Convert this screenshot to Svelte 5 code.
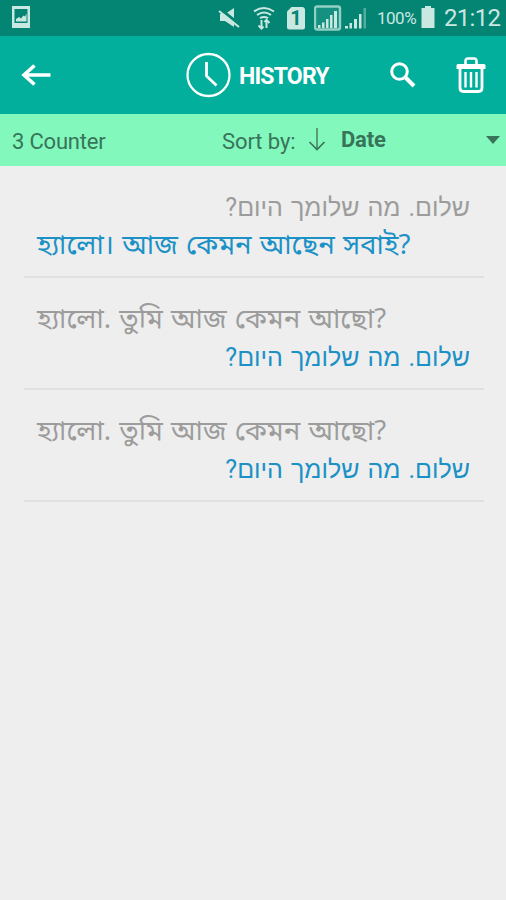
<script lang="ts">
  type Line = { text: string; lang: 'he' | 'bn' };
  type Entry = { id: number; source: Line; result: Line };

  const entries: Entry[] = [
    {
      id: 1,
      source: { text: 'שלום. מה שלומך היום?', lang: 'he' },
      result: { text: 'হ্যালো। আজ কেমন আছেন সবাই?', lang: 'bn' },
    },
    {
      id: 2,
      source: { text: 'হ্যালো. তুমি আজ কেমন আছো?', lang: 'bn' },
      result: { text: 'שלום. מה שלומך היום?', lang: 'he' },
    },
    {
      id: 3,
      source: { text: 'হ্যালো. তুমি আজ কেমন আছো?', lang: 'bn' },
      result: { text: 'שלום. מה שלומך היום?', lang: 'he' },
    },
  ];
</script>

<div class="screen">
  <div class="status">
    <svg class="status-picture" width="20" height="22" viewBox="0 0 20 22">
      <path fill-rule="evenodd" d="M1 0h18v22H1zM3.500 3v14h13V3z" />
      <path d="M5 15.500v-2.500l3-2 2 1.500 2.500-3 1.500 1 1.500-3v8z" />
    </svg>
    <svg class="status-mute" width="22" height="22" viewBox="0 0 22 22">
      <path d="M2 7h5l9-6v19l-9-6H2z" />
      <path d="M1 1l20 16" stroke="#048473" stroke-width="3" />
      <path d="M1 4l20 16" stroke="#c9e8e2" stroke-width="2" />
    </svg>
    <svg class="status-wifi" width="24" height="24" viewBox="0 0 24 24">
      <g fill="none" stroke="#c9e8e2" stroke-width="2">
        <path d="M2 5.500q10-7 20 0" />
        <path d="M5 9q7-5 14 0" />
        <path d="M8 12.200q4-2.600 8 0" />
        <path d="M9.500 14v8M14.500 14v8" />
        <path d="M6.500 19.500l3 3 2-2M12.500 16l2-2 3 3" />
      </g>
    </svg>
    <span class="sim">1</span>
    <svg class="status-signal" width="52" height="26" viewBox="0 0 52 26">
      <rect x="1" y="1.500" width="25" height="23" rx="2" fill="#169080" stroke="#92cfc4" stroke-width="2.400" />
      <path d="M4 20h2.500v3H4zM8 17.500h2.500V23H8zM12 14h2.500v9H12zM16 10h2.500v13H16zM20 6h3v17h-3z" />
      <path d="M31 21h3v2.500h-3zM35.500 18h2.500v5.500h-2.500zM40 14h3v9.500h-3z" />
      <path d="M45 9h2.500v14.500H45z" />
      <path d="M49.500 3h2.500v20.500h-2.500z" opacity="0.4" />
    </svg>
    <span class="percent">100%</span>
    <svg class="status-battery" width="16" height="22" viewBox="0 0 16 22">
      <path d="M5 0h6v2h3.500v20h-13V2H5z" />
    </svg>
    <span class="time">21:12</span>
  </div>

  <header class="bar">
    <button class="icon-button back" aria-label="Back">
      <svg width="32" height="24" viewBox="0 0 32 24">
        <path d="M31.500 12H5M15.500 2.500L5 12l10.500 9.500" fill="none" stroke="#fff" stroke-width="3.600" />
      </svg>
    </button>
    <h1 class="title">
      <svg width="46" height="46" viewBox="0 0 46 46">
        <circle cx="22.500" cy="23" r="21" />
        <path d="M20.500 10v14l10 9.500" />
      </svg>
      <span>History</span>
    </h1>
    <button class="icon-button search" aria-label="Search">
      <svg width="28" height="28" viewBox="0 0 28 28">
        <g fill="none" stroke="#fff">
          <circle cx="10.500" cy="10.500" r="7.800" stroke-width="3" />
          <path d="M16 16l9 9" stroke-width="4" />
        </g>
      </svg>
    </button>
    <button class="icon-button delete" aria-label="Delete">
      <svg width="32" height="38" viewBox="0 0 32 38">
        <g fill="none" stroke="#fff">
          <path d="M1.500 13V9.500q0-1.500 1.500-1.500h26q1.500 0 1.500 1.500V13z" fill="#fff" stroke="none" />
          <path d="M10.500 8V5q0-2.500 2.500-2.500h6q2.500 0 2.500 2.500v3" stroke-width="2.600" />
          <path d="M5 12v20q0 3.500 3.500 3.500h15q3.500 0 3.500-3.500V12" stroke-width="2.800" />
          <path d="M10.500 16v15.500M16 16v15.500M21.500 16v15.500" stroke-width="2.400" />
        </g>
      </svg>
    </button>
  </header>

  <div class="sort">
    <span class="count">{entries.length} Counter</span>
    <span class="sort-label">Sort by:</span>
    <svg class="sort-direction" width="18" height="26" viewBox="0 0 18 26">
      <path d="M9 1v21" stroke="#5a9b78" stroke-width="2" />
      <path d="M1.500 15L9 22.500l7.500-7.500" fill="none" stroke="#38745a" stroke-width="1.700" />
    </svg>
    <span class="sort-value">Date</span>
    <svg class="caret" width="14" height="8" viewBox="0 0 14 8">
      <path d="M0 0h14L7 8z" />
    </svg>
  </div>

  <ul class="list">
    {#each entries as entry (entry.id)}
      <li class="entry">
        <p class="line {entry.source.lang}" lang={entry.source.lang} dir={entry.source.lang === 'he' ? 'rtl' : 'ltr'}>{entry.source.text}</p>
        <p class="line line--result {entry.result.lang}" lang={entry.result.lang} dir={entry.result.lang === 'he' ? 'rtl' : 'ltr'}>{entry.result.text}</p>
      </li>
    {/each}
  </ul>
</div>

<style>
  :global(body) {
    background: #eee;
  }

  .screen {
    min-height: 900px;
    background: #eee;
    font-family: Roboto, 'Noto Sans', sans-serif;
    overflow: hidden;
  }

  svg {
    display: block;
    flex: none;
  }

  .status {
    display: flex;
    align-items: center;
    height: 36px;
    background: #048473;
    color: #c9e8e2;
    fill: #c9e8e2;
  }

  .status-picture {
    margin: 0 0 2px 11px;
  }

  .status-mute {
    margin-left: 187px;
  }

  .status-wifi {
    margin-left: 12px;
  }

  .sim {
    width: 18px;
    height: 23px;
    margin-left: 11px;
    border-radius: 3px;
    background: #c9e8e2;
    color: #048473;
    font-size: 20px;
    font-weight: 700;
    line-height: 23px;
    text-align: center;
    clip-path: polygon(5px 0, 100% 0, 100% 100%, 0 100%, 0 5px);
  }

  .status-signal {
    margin-left: 9px;
  }

  .percent {
    width: 40px;
    margin-left: 11px;
    font-size: 17px;
    letter-spacing: -0.5px;
    white-space: nowrap;
  }

  .status-battery {
    margin: 0 0 2px 3px;
  }

  .time {
    margin-left: 8px;
    font-size: 24px;
    letter-spacing: -0.7px;
    white-space: nowrap;
  }

  .bar {
    display: flex;
    align-items: center;
    height: 78px;
    background: #02af9c;
    color: #fff;
  }

  .icon-button {
    padding: 0;
    border: none;
    background: none;
    cursor: pointer;
  }

  .back {
    margin-left: 19px;
  }

  .title {
    display: flex;
    align-items: center;
    gap: 7px;
    width: 203px;
    margin: 0 0 0 135px;
    font-size: 23px;
    font-weight: 700;
    letter-spacing: -0.8px;
    text-transform: uppercase;
  }

  .title span {
    padding-top: 2px;
  }

  .title svg {
    fill: none;
    stroke: #fff;
    stroke-width: 2.3;
  }

  .title path {
    stroke-width: 2.8;
  }

  .search {
    margin-bottom: 1px;
  }

  .delete {
    margin: 0 0 1px 38px;
  }

  .sort {
    display: flex;
    align-items: center;
    height: 52px;
    background: #82f8bc;
    color: #38745a;
    font-size: 22px;
  }

  .count {
    width: 210px;
    padding: 2px 0 0 12px;
    letter-spacing: -0.2px;
  }

  .sort-label {
    width: 86px;
    padding-top: 2px;
    letter-spacing: -0.1px;
    white-space: nowrap;
  }

  .sort-value {
    margin: 0 auto 1px 15px;
    font-weight: 700;
    letter-spacing: -0.2px;
  }

  .caret {
    margin-right: 6px;
    fill: #38745a;
  }

  .list {
    margin: 0;
    padding: 0 22px 0 24px;
    list-style: none;
  }

  .entry {
    box-sizing: border-box;
    height: 112px;
    padding: 21px 14px 0 13px;
    border-bottom: 2px solid #e0e0e0;
  }

  .line {
    height: 38px;
    margin: 0;
    color: #9c9c9c;
    line-height: 38px;
    white-space: nowrap;
  }

  .line--result {
    color: #1c91c6;
  }

  /* Roboto has no Hebrew, it only supplies the spaces and punctuation */
  .he {
    font-family: Roboto, 'Liberation Sans', Arial, sans-serif;
    font-size: 25px;
    line-height: 41px;
    word-spacing: 1.8px;
  }

  .bn {
    font-family: 'Noto Sans', 'Noto Sans Bengali', sans-serif;
    font-size: 27.5px;
    line-height: 37px;
    word-spacing: 1px;
  }
</style>
